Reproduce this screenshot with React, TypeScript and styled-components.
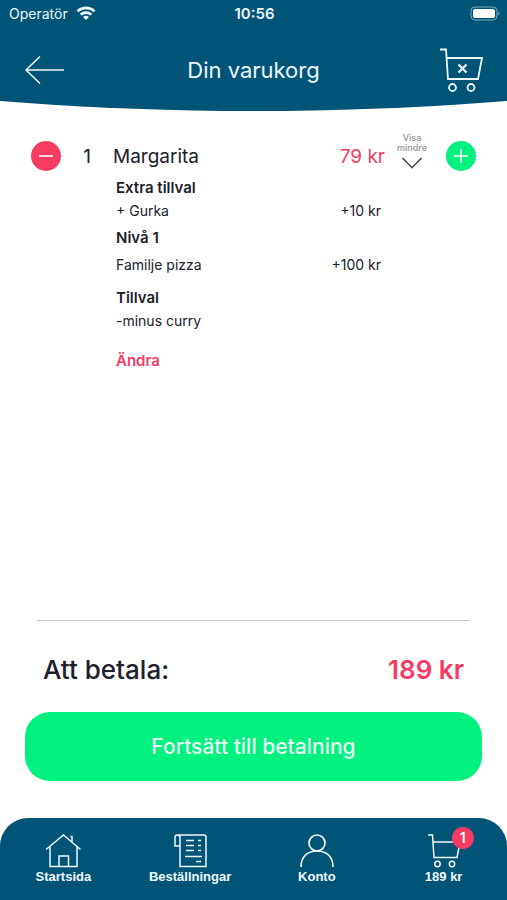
import React, { useState } from 'react';
import styled, { createGlobalStyle } from 'styled-components';

const navy = '#005478';
const pink = '#f83b63';
const green = '#00f180';
const ink = '#20202b';

const GlobalStyle = createGlobalStyle`
  *, *::before, *::after { box-sizing: border-box; }
  body {
    margin: 0;
    background: #fff;
    color: ${ink};
    font-family: Inter, "Liberation Sans", sans-serif;
  }
  button { font: inherit; color: inherit; background: none; border: 0; padding: 0; cursor: pointer; }
  a { color: inherit; text-decoration: none; }
  h1, h2, h3, p, ul { margin: 0; padding: 0; }
  ul { list-style: none; }
  svg { display: block; fill: none; stroke: currentColor; }
`;

const Screen = styled.div`
  min-height: 100vh;
  display: flex;
  flex-direction: column;
`;

const Header = styled.header`
  color: #eef8fc;
  background: ${navy};
  padding-bottom: 16px;
  clip-path: ellipse(120% 100% at 50% 0);
`;

const StatusBar = styled.div`
  display: grid;
  grid-template-columns: 1fr auto 1fr;
  align-items: center;
  height: 27px;
  padding: 0 7px 0 9px;
  font-size: 14px;
`;

const Carrier = styled.span`
  display: flex;
  align-items: center;
  gap: 8px;
`;

const Clock = styled.time`
  font-size: 15px;
  font-weight: 600;
`;

const Battery = styled.span`
  justify-self: end;
`;

const TitleBar = styled.div`
  display: grid;
  grid-template-columns: 1fr auto 1fr;
  align-items: center;
  height: 68px;
  padding: 17px 24px 0;
`;

const Title = styled.h1`
  font-size: 22px;
  line-height: 28px;
  font-weight: 400;
`;

const HeaderButton = styled.button<{ $end?: boolean }>`
  justify-self: ${(p) => (p.$end ? 'end' : 'start')};
`;

const Cart = styled.main`
  flex: 1;
  padding: 25px 31px 0;
`;

const ItemRow = styled.div`
  display: grid;
  grid-template-columns: 30px 52px 1fr auto 54px 37px;
  grid-template-rows: 40px;
  align-items: center;
  font-size: 19px;
`;

const RoundButton = styled.button<{ $tone: string }>`
  display: grid;
  place-items: center;
  justify-self: end;
  width: 30px;
  height: 30px;
  border-radius: 50%;
  color: #fff;
  background: ${(p) => p.$tone};
`;

const Quantity = styled.span`
  text-align: center;
`;

const ItemName = styled.h2`
  font-size: 19px;
  font-weight: 400;
`;

const Price = styled.span`
  color: ${pink};
`;

const Toggle = styled.button`
  display: flex;
  flex-direction: column;
  align-items: center;
  gap: 4px;
  padding-bottom: 10px;
  color: #555;
  font-size: 9px;
  line-height: 10px;
`;

const ToggleLabel = styled.span`
  width: 40px;
  color: #929292;
  font-weight: 500;
`;

const Details = styled.div`
  display: flex;
  flex-direction: column;
  gap: 10px;
  padding: 0 95px 0 85px;
  font-size: 14px;
  line-height: 23px;
`;

const Group = styled.section<{ $gap?: number }>`
  display: flex;
  flex-direction: column;
  gap: ${(p) => p.$gap ?? 0}px;
  &:nth-of-type(2) { margin-top: -6px; }
`;

const GroupName = styled.h3`
  font-size: 15px;
  font-weight: 600;
`;

const Choice = styled.li`
  display: flex;
  justify-content: space-between;
`;

const EditLink = styled.a`
  align-self: flex-start;
  margin-top: 7px;
  color: ${pink};
  font-size: 15px;
  font-weight: 600;
`;

const Summary = styled.section`
  padding: 0 25px 37px;
`;

const Total = styled.div`
  display: flex;
  align-items: center;
  justify-content: space-between;
  height: 92px;
  margin: 0 12px;
  padding: 6px 6px 0;
  border-top: 1px solid #c6c6c8;
  font-size: 26px;
  font-weight: 500;
`;

const Amount = styled(Price)`
  font-weight: 600;
`;

const PayButton = styled.button`
  width: 100%;
  height: 69px;
  border-radius: 25px;
  background: ${green};
  color: #e9fff4;
  font-size: 21px;
  font-weight: 500;
`;

const Nav = styled.nav`
  display: grid;
  grid-template-columns: repeat(4, 1fr);
  height: 82px;
  padding-top: 15px;
  border-radius: 28px 28px 0 0;
  background: ${navy};
  color: #f0f9fd;
  font: bold 13px/18px "Liberation Sans", sans-serif;
`;

const NavLink = styled.a`
  display: flex;
  flex-direction: column;
  align-items: center;
`;

const NavIcon = styled.span`
  position: relative;
`;

const Badge = styled.span`
  position: absolute;
  top: -6px;
  right: -12px;
  width: 22px;
  height: 22px;
  border-radius: 50%;
  background: ${pink};
  font: 600 14px/22px Inter, sans-serif;
  text-align: center;
`;

const WifiIcon = () => (
  <svg width="20" height="15" viewBox="0 0 20 15" strokeWidth="2.6" aria-hidden="true">
    <path d="M1.5 5.2C6.3.8 13.7.8 18.5 5.2M4.7 8.6c3-2.7 7.6-2.7 10.6 0" />
    <path d="M10 14l-3-3.1c1.8-1.5 4.2-1.5 6 0z" fill="currentColor" stroke="none" />
  </svg>
);

const BatteryIcon = () => (
  <svg width="30" height="15" viewBox="0 0 30 15" role="img" aria-label="Batteri">
    <rect x="1" y="1" width="26" height="13" rx="4" stroke="#7fa9bb" />
    <rect x="3" y="3" width="22" height="9" rx="2" fill="#fff" stroke="none" />
    <path d="M28.3 5.5c1.6.6 1.6 3.4 0 4z" fill="#7fa9bb" stroke="none" />
  </svg>
);

const BackIcon = () => (
  <svg width="41" height="30" viewBox="0 0 41 30" strokeWidth="1.5" aria-hidden="true">
    <path d="M16 1.5L2 15l14 13.5M2 15h38" />
  </svg>
);

const EmptyCartIcon = () => (
  <svg width="45" height="46" viewBox="0 0 45 46" strokeWidth="1.8" aria-hidden="true">
    <path d="M2 2.5h6L10 32h30l4-21H9" />
    <path d="M20.5 17.5l8 8m0-8l-8 8" strokeWidth="2.3" />
    <circle cx="14.5" cy="40.5" r="3.5" />
    <circle cx="33" cy="40.5" r="3.5" />
  </svg>
);

const HouseIcon = () => (
  <svg width="36" height="35" viewBox="0 0 36 35" strokeWidth="1.5" aria-hidden="true">
    <path d="M1 16.5L18.5 2l17 14.5M5 14v19.5h27V14M14 33.5V23h9.5v10.5M25.5 3.5H27V9" />
  </svg>
);

const OrdersIcon = () => (
  <svg width="36" height="35" viewBox="0 0 36 35" strokeWidth="1.5" aria-hidden="true">
    <path d="M6 2h26q2 0 2 2v29.5H8V4.5Q8 2 5.500 2T3 4.5V13h5" />
    <path d="M14 7.5h8m4 0h3M14 12.5h8m4 0h3M14 17.5h8m4 0h3M13 23.5h17M24 28.500h5" />
  </svg>
);

const AccountIcon = () => (
  <svg width="36" height="35" viewBox="0 0 36 35" strokeWidth="1.7" aria-hidden="true">
    <circle cx="18" cy="10" r="8" />
    <path d="M2 34c0-10 6-16 16-16s16 6 16 16" />
  </svg>
);

const CartIcon = () => (
  <svg width="36" height="35" viewBox="0 0 36 35" strokeWidth="1.5" aria-hidden="true">
    <path d="M2 2h4.500L8 24.500h23L34 9H7" />
    <circle cx="11.5" cy="31" r="2.7" />
    <circle cx="26" cy="31" r="2.7" />
  </svg>
);

const groups = [
  { name: 'Extra tillval', gap: 0, choices: [['+ Gurka', '+10 kr']] },
  { name: 'Nivå 1', gap: 4, choices: [['Familje pizza', '+100 kr']] },
  { name: 'Tillval', gap: 0, choices: [['-minus curry', '']] },
];

const navItems = [
  { label: 'Startsida', Icon: HouseIcon },
  { label: 'Beställningar', Icon: OrdersIcon },
  { label: 'Konto', Icon: AccountIcon },
  { label: '189 kr', Icon: CartIcon, count: 1 },
];

export default function App() {
  const [open, setOpen] = useState(true);
  return (
    <>
      <GlobalStyle />
      <Screen>
        <Header>
          <StatusBar>
            <Carrier>Operatör <WifiIcon /></Carrier>
            <Clock>10:56</Clock>
            <Battery><BatteryIcon /></Battery>
          </StatusBar>
          <TitleBar>
            <HeaderButton aria-label="Tillbaka"><BackIcon /></HeaderButton>
            <Title>Din varukorg</Title>
            <HeaderButton $end aria-label="Töm varukorgen"><EmptyCartIcon /></HeaderButton>
          </TitleBar>
        </Header>
        <Cart>
          <ItemRow>
            <RoundButton $tone={pink} aria-label="Ta bort en">
              <svg width="16" height="16" viewBox="0 0 16 16" strokeWidth="1.6"><path d="M1 8h14" /></svg>
            </RoundButton>
            <Quantity>1</Quantity>
            <ItemName>Margarita</ItemName>
            <Price>79 kr</Price>
            <Toggle aria-expanded={open} onClick={() => setOpen(!open)}>
              <ToggleLabel>Visa mindre</ToggleLabel>
              <svg width="20" height="12" viewBox="0 0 20 12" strokeWidth="1.6"><path d="M.5 1L10 10.5 19.5 1" /></svg>
            </Toggle>
            <RoundButton $tone={green} aria-label="Lägg till en">
              <svg width="16" height="16" viewBox="0 0 16 16" strokeWidth="1.6"><path d="M1 8h14M8 1v14" /></svg>
            </RoundButton>
          </ItemRow>
          {open && (
            <Details>
              {groups.map((g) => (
                <Group key={g.name} $gap={g.gap}>
                  <GroupName>{g.name}</GroupName>
                  <ul>
                    {g.choices.map(([name, price]) => (
                      <Choice key={name}><span>{name}</span>{price && <span>{price}</span>}</Choice>
                    ))}
                  </ul>
                </Group>
              ))}
              <EditLink href="#andra">Ändra</EditLink>
            </Details>
          )}
        </Cart>
        <Summary>
          <Total><span>Att betala:</span><Amount>189 kr</Amount></Total>
          <PayButton>Fortsätt till betalning</PayButton>
        </Summary>
        <Nav>
          {navItems.map(({ label, Icon, count }) => (
            <NavLink key={label} href="#">
              <NavIcon><Icon />{count && <Badge>{count}</Badge>}</NavIcon>
              {label}
            </NavLink>
          ))}
        </Nav>
      </Screen>
    </>
  );
}
